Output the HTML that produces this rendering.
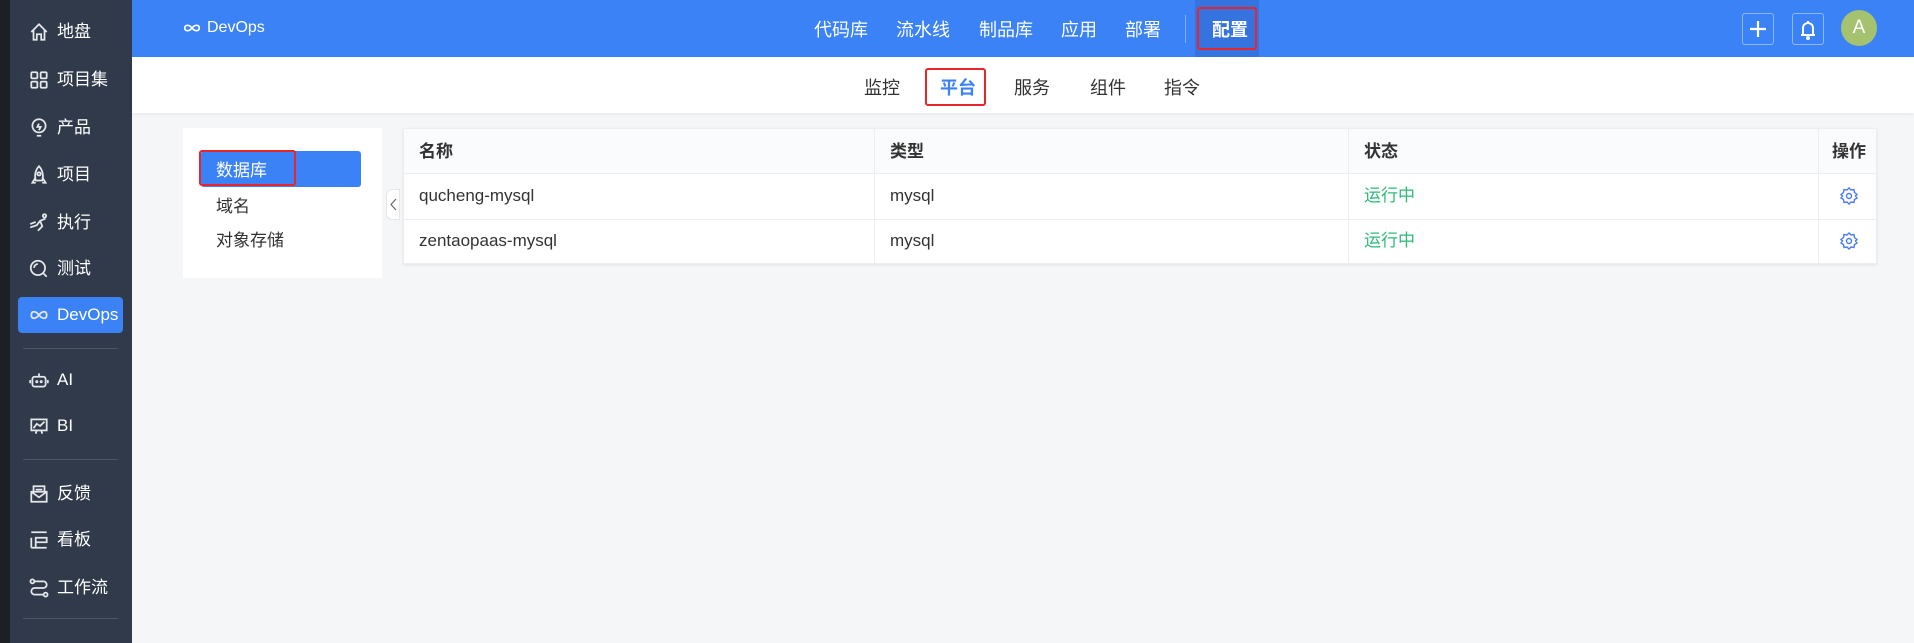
<!DOCTYPE html>
<html><head><meta charset="utf-8"><style>
*{box-sizing:border-box;margin:0;padding:0}
html,body{width:1914px;height:643px;overflow:hidden}
body{background:#f5f6f8;font-family:"Liberation Sans","Noto Sans CJK SC",sans-serif;font-size:17px;line-height:20px;color:#333;position:relative}
.abs{position:absolute}
#side{left:0;top:0;width:132px;height:643px;background:#303a4b}
#strip{left:0;top:0;width:10px;height:643px;background:#1c1f26}
.si{position:absolute;left:28px;color:#fff;font-size:17px;display:flex;align-items:center;gap:7px;height:24px}
.si svg{width:22px;height:22px;stroke:#e5e7eb;fill:none;stroke-width:1.6}
.div{position:absolute;left:23px;width:95px;height:1px;background:#4b5566}
#hdr{left:132px;top:0;width:1782px;height:57px;background:#3b82f6}
.tn{position:absolute;top:20px;color:#fff;font-size:18px}
#sub{left:132px;top:57px;width:1782px;height:56px;background:#fff;box-shadow:0 2px 4px rgba(0,0,0,.05)}
.sn{position:absolute;top:78px;font-size:18px;color:#333}
.red{position:absolute;border:2px solid #e8252a;border-radius:3px}
</style></head><body>
<div id="side" class="abs"></div><div id="strip" class="abs"></div>
<div class="si" style="top:20px"><svg viewBox="0 0 20 20"><path d="M3 10 L10 3 L17 10 M5 8 V17 H8 V12 H12 V17 H15 V8"/></svg>地盘</div>
<div class="si" style="top:68px"><svg viewBox="0 0 20 20"><rect x="3" y="3" width="5.5" height="5.5" rx="1"/><rect x="11.5" y="3" width="5.5" height="5.5" rx="1"/><rect x="3" y="11.5" width="5.5" height="5.5" rx="1"/><rect x="11.5" y="11.5" width="5.5" height="5.5" rx="1"/></svg>项目集</div>
<div class="si" style="top:116px"><svg viewBox="0 0 20 20"><circle cx="10" cy="8" r="6"/><path d="M8 17h4M10 6l-1.5 3h3L10 12"/></svg>产品</div>
<div class="si" style="top:163px"><svg viewBox="0 0 20 20"><path d="M10 2 C14 6 14 12 13 15 H7 C6 12 6 6 10 2Z M7 12 L4 17 H7 M13 12 L16 17 H13"/><circle cx="10" cy="9" r="1.5"/></svg>项目</div>
<div class="si" style="top:211px"><svg viewBox="0 0 20 20"><path d="M2 14 L8 12 L11 8 L16 6 M11 8 L13 13 L9 17 M2 11 L7 9"/><circle cx="15" cy="3.5" r="1.5"/></svg>执行</div>
<div class="si" style="top:257px"><svg viewBox="0 0 20 20"><circle cx="9" cy="9" r="6.5"/><path d="M14 14 L17 17 M5.5 9 a3.5 3.5 0 0 1 3.5-3.5"/></svg>测试</div>
<div class="abs" style="left:18px;top:297px;width:105px;height:36px;background:#3b82f6;border-radius:4px"></div>
<div class="si" style="top:303px"><svg viewBox="0 0 20 20"><path d="M10 10 C7 6 3 6 3 10 C3 14 7 14 10 10 C13 6 17 6 17 10 C17 14 13 14 10 10Z"/></svg>DevOps</div>
<div class="div" style="top:348px"></div>
<div class="si" style="top:368px"><svg viewBox="0 0 20 20"><rect x="4" y="7" width="12" height="9" rx="2"/><path d="M10 4v3M2 10v3M18 10v3"/><circle cx="8" cy="11.5" r=".6"/><circle cx="12" cy="11.5" r=".6"/></svg>AI</div>
<div class="si" style="top:414px"><svg viewBox="0 0 20 20"><rect x="3" y="4" width="14" height="10"/><path d="M5 12 L8 8 L11 10 L15 6 M8 14 L7 17 M12 14 L13 17"/></svg>BI</div>
<div class="div" style="top:459px"></div>
<div class="si" style="top:482px"><svg viewBox="0 0 20 20"><path d="M5 8 V3 H15 V8 M3 8 H17 V17 H3Z M3 8 L10 13 L17 8 M7 6h6"/></svg>反馈</div>
<div class="si" style="top:528px"><svg viewBox="0 0 20 20"><path d="M3 3h14M7 8h10v4H7zM3 8v9M3 17h14M7 12v5"/></svg>看板</div>
<div class="si" style="top:576px"><svg viewBox="0 0 20 20"><circle cx="4" cy="4" r="1.8"/><circle cx="16" cy="16" r="1.8"/><path d="M6 4h8a3 3 0 0 1 0 6H6a3 3 0 0 0 0 6h8"/></svg>工作流</div>
<div class="div" style="top:618px"></div>

<div id="hdr" class="abs"></div>
<div class="abs" style="left:183px;top:18px;color:#fff;font-size:16px;display:flex;align-items:center;gap:6px"><svg width="18" height="12" viewBox="0 0 20 12" fill="none" stroke="#fff" stroke-width="1.8"><path d="M10 6 C7 2 2 2 2 6 C2 10 7 10 10 6 C13 2 18 2 18 6 C18 10 13 10 10 6Z"/></svg>DevOps</div>
<div class="tn" style="left:814px">代码库</div>
<div class="tn" style="left:896px">流水线</div>
<div class="tn" style="left:979px">制品库</div>
<div class="tn" style="left:1061px">应用</div>
<div class="tn" style="left:1125px">部署</div>
<div class="abs" style="left:1185px;top:15px;width:1px;height:28px;background:#7fb0f8"></div>
<div class="abs" style="left:1195px;top:0;width:64px;height:57px;background:#3574e0"></div>
<div class="tn" style="left:1212px;font-weight:bold">配置</div>
<div class="red" style="left:1197px;top:7px;width:60px;height:43px"></div>
<div class="abs" style="left:1742px;top:13px;width:32px;height:32px;border:1px solid #8db8fa;border-radius:3px"><svg width="30" height="30" viewBox="0 0 30 30" stroke="#fff" stroke-width="2.2"><path d="M15 7v16M7 15h16"/></svg></div>
<div class="abs" style="left:1792px;top:13px;width:32px;height:32px;border:1px solid #8db8fa;border-radius:3px"><svg width="30" height="30" viewBox="0 0 30 30" fill="none" stroke="#fff" stroke-width="2"><path d="M10 21V14a5 5 0 0 1 10 0v7zM8 21h14M15 7v2"/><circle cx="15" cy="24" r="1" fill="#fff"/></svg></div>
<div class="abs" style="left:1841px;top:10px;width:36px;height:36px;border-radius:50%;background:#a5c26e;color:#fff;font-size:19px;text-align:center;line-height:36px">A</div>

<div id="sub" class="abs"></div>
<div class="sn" style="left:864px">监控</div>
<div class="sn" style="left:940px;color:#3b82f6;font-weight:bold">平台</div>
<div class="red" style="left:925px;top:68px;width:61px;height:38px"></div>
<div class="sn" style="left:1014px">服务</div>
<div class="sn" style="left:1090px">组件</div>
<div class="sn" style="left:1164px">指令</div>

<div class="abs" style="left:183px;top:128px;width:199px;height:150px;background:#fff"></div>
<div class="abs" style="left:201px;top:151px;width:160px;height:36px;background:#3b82f6;border-radius:3px"></div>
<div class="abs" style="left:216px;top:161px;color:#fff">数据库</div>
<div class="red" style="left:199px;top:150px;width:97px;height:36px"></div>
<div class="abs" style="left:216px;top:197px">域名</div>
<div class="abs" style="left:216px;top:231px">对象存储</div>
<div class="abs" style="left:386px;top:189px;width:14px;height:31px;background:#fff;border:1px solid #e5e7eb;border-radius:6px 0 0 6px"><svg width="12" height="29" viewBox="0 0 12 29" fill="none" stroke="#666" stroke-width="1.2"><path d="M9 9 L4 14.5 L9 20"/></svg></div>

<div class="abs" style="left:403px;top:128px;width:1474px;height:136px;background:#fff;box-shadow:0 1px 3px rgba(0,0,0,.08);border:1px solid #eceef1">
<div class="abs" style="left:0;top:0;width:1472px;height:45px;background:#fafbfd;border-bottom:1px solid #eceef1"></div>
<div class="abs" style="left:0;top:90px;width:1472px;height:1px;background:#eceef1"></div>
<div class="abs" style="left:470px;top:0;width:1px;height:134px;background:#eceef1"></div>
<div class="abs" style="left:944px;top:0;width:1px;height:134px;background:#eceef1"></div>
<div class="abs" style="left:1414px;top:0;width:1px;height:134px;background:#eceef1"></div>
<div class="abs" style="left:15px;top:13px;font-weight:bold">名称</div>
<div class="abs" style="left:486px;top:13px;font-weight:bold">类型</div>
<div class="abs" style="left:960px;top:13px;font-weight:bold">状态</div>
<div class="abs" style="left:1428px;top:13px;font-weight:bold">操作</div>
<div class="abs" style="left:15px;top:57px">qucheng-mysql</div>
<div class="abs" style="left:486px;top:57px">mysql</div>
<div class="abs" style="left:960px;top:57px;color:#2dbb78">运行中</div>
<div class="abs" style="left:15px;top:102px">zentaopaas-mysql</div>
<div class="abs" style="left:486px;top:102px">mysql</div>
<div class="abs" style="left:960px;top:102px;color:#2dbb78">运行中</div>
<svg class="abs" style="left:1435px;top:57px" width="20" height="20" viewBox="0 0 20 20" fill="none" stroke="#4a7cf0" stroke-width="1.4"><path d="M10 2 L12 4 L15 3.5 L15.5 6.5 L18 8.5 L16.5 10 L18 12 L15.5 13.5 L15 16.5 L12 16 L10 18 L8 16 L5 16.5 L4.5 13.5 L2 12 L3.5 10 L2 8.5 L4.5 6.5 L5 3.5 L8 4Z"/><circle cx="10" cy="10" r="2.5"/></svg>
<svg class="abs" style="left:1435px;top:102px" width="20" height="20" viewBox="0 0 20 20" fill="none" stroke="#4a7cf0" stroke-width="1.4"><path d="M10 2 L12 4 L15 3.5 L15.5 6.5 L18 8.5 L16.5 10 L18 12 L15.5 13.5 L15 16.5 L12 16 L10 18 L8 16 L5 16.5 L4.5 13.5 L2 12 L3.5 10 L2 8.5 L4.5 6.5 L5 3.5 L8 4Z"/><circle cx="10" cy="10" r="2.5"/></svg>
</div>
</body></html>
